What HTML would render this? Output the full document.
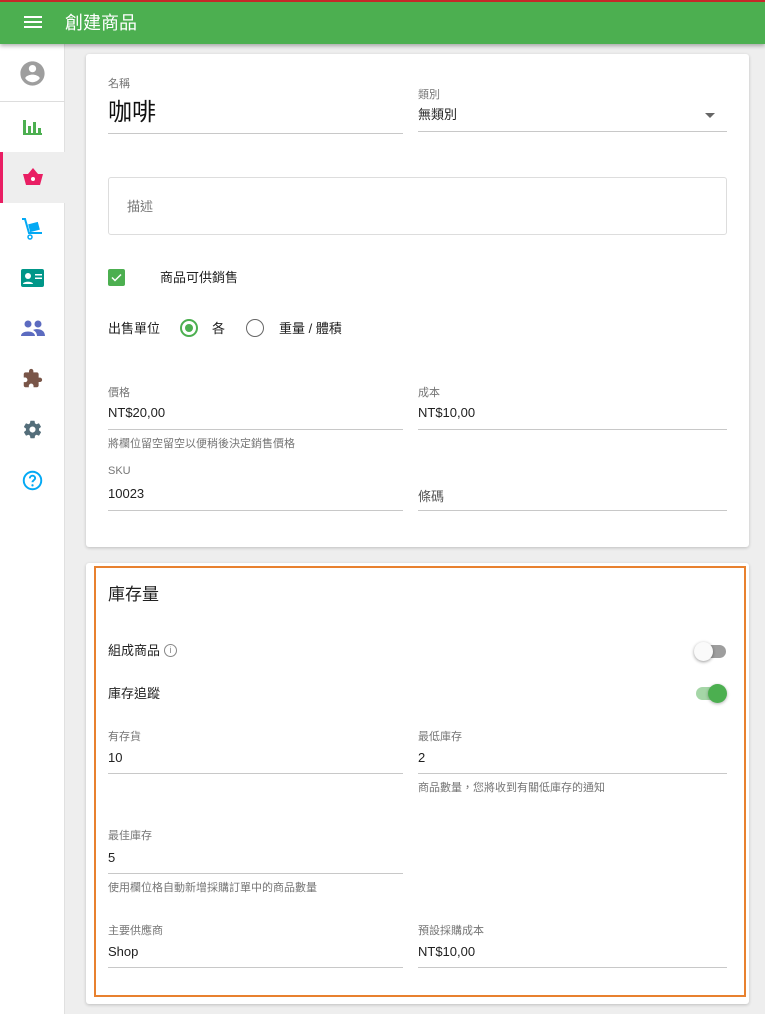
<!DOCTYPE html>
<html><head><meta charset="utf-8"><style>
*{box-sizing:border-box;margin:0;padding:0}
body{width:765px;height:1014px;overflow:hidden;background:#eee;font-family:"Liberation Sans","Noto Sans CJK TC",sans-serif;position:relative;color:#212121}
.a{position:absolute}
.top{left:0;top:0;width:765px;height:44px;background:#4caf50;border-top:2px solid #c62828;box-shadow:0 2px 4px rgba(0,0,0,.3);z-index:2}
.side{left:0;top:44px;width:65px;height:970px;background:#fff;border-right:1px solid #e0e0e0}
.card{background:#fff;border-radius:3px;box-shadow:0 1px 3px rgba(0,0,0,.2)}
.lbl{font-size:11px;color:#757575}
.val{font-size:13px;color:#212121}
.line{height:1px;background:#c8c8c8}
.hint{font-size:11px;color:#757575}
</style></head><body>
<div class="a top">
 <div class="a" style="left:24px;top:14px;width:18px;height:2px;background:#fff;box-shadow:0 5px 0 #fff,0 10px 0 #fff"></div>
 <div class="a" style="left:65px;top:7px;font-size:18px;color:#fff">創建商品</div>
</div>
<div class="a side">
 <svg class="a" style="left:18px;top:15px" width="29" height="29" viewBox="0 0 24 24"><path fill="#9e9e9e" d="M12 2C6.48 2 2 6.48 2 12s4.48 10 10 10 10-4.48 10-10S17.520 2 12 2zm0 3c1.66 0 3 1.34 3 3s-1.34 3-3 3-3-1.34-3-3 1.34-3 3-3zm0 14.2c-2.5 0-4.71-1.28-6-3.22.03-1.990 4-3.08 6-3.08 1.99 0 5.97 1.09 6 3.08-1.29 1.94-3.5 3.22-6 3.22z"/></svg>
 <div class="a" style="left:0;top:57px;width:65px;height:1px;background:#ddd"></div>
 <svg class="a" style="left:22px;top:74px" width="20" height="18" viewBox="0 0 20 18"><path fill="#4caf50" d="M1 2h3v14H1zM6 8h3v8H6zM11 4h3v12h-3zM16 10h3v6h-3zM1 15h19v2H1z"/></svg>
 <div class="a" style="left:0;top:108px;width:65px;height:51px;background:#eee"></div>
 <div class="a" style="left:0;top:108px;width:3px;height:51px;background:#e91e63"></div>
 <svg class="a" style="left:21px;top:123px" width="24" height="20" viewBox="0 0 24 20"><path fill="#e91e63" d="M7 7L12 1l5 6h5l-3 11H5L2 7z"/><circle cx="12" cy="12" r="2" fill="#fff"/></svg>
 <svg class="a" style="left:21px;top:173px" width="24" height="24" viewBox="0 0 24 24"><path fill="none" stroke="#03a9f4" stroke-width="2" d="M1 2h3l4 14h13"/><rect x="8" y="6" width="10" height="8" fill="#03a9f4" transform="rotate(-15 13 10)"/><circle cx="9" cy="20" r="2" fill="none" stroke="#03a9f4" stroke-width="1.5"/></svg>
 <svg class="a" style="left:21px;top:225px" width="23" height="18" viewBox="0 0 23 18"><rect width="23" height="18" rx="2" fill="#009688"/><circle cx="7" cy="7" r="3" fill="#fff"/><path fill="#fff" d="M2 15c0-3 10-3 10 0zM14 5h7v1.5h-7zM14 8.5h7V10h-7z"/></svg>
 <svg class="a" style="left:21px;top:276px" width="24" height="16" viewBox="0 0 24 16"><circle cx="7" cy="4" r="3.5" fill="#5c6bc0"/><circle cx="17" cy="4" r="3.5" fill="#5c6bc0"/><path fill="#5c6bc0" d="M0 16c0-6 14-6 14 0zM12 10c4-2 12-1 12 6h-8c0-3-2-5-4-6z"/></svg>
 <svg class="a" style="left:22px;top:324px" width="21" height="21" viewBox="0 0 24 24"><path fill="#795548" d="M20.5 11H19V7c0-1.1-.9-2-2-2h-4V3.5a2.5 2.5 0 00-5 0V5H4c-1.1 0-2 .9-2 2v3.8h1.5c1.5 0 2.7 1.2 2.7 2.7S5 16.2 3.5 16.2H2V20c0 1.1.9 2 2 2h3.8v-1.5c0-1.5 1.2-2.7 2.7-2.7s2.7 1.2 2.7 2.7V22H17c1.1 0 2-.9 2-2v-4h1.5a2.5 2.5 0 000-5z"/></svg>
 <svg class="a" style="left:22px;top:375px" width="21" height="21" viewBox="0 0 24 24"><path fill="#546e7a" d="M19.4 13c.04-.3.06-.65.06-1s-.02-.7-.07-1l2.1-1.650c.2-.15.24-.42.12-.64l-2-3.46c-.12-.22-.39-.3-.61-.22l-2.5 1c-.52-.4-1.08-.73-1.7-.98l-.37-2.65A.49.49 0 0014 2h-4c-.25 0-.46.18-.5.42l-.37 2.65c-.62.25-1.18.59-1.7.98l-2.5-1c-.22-.08-.49 0-.61.22l-2 3.46c-.13.22-.07.49.12.64L4.57 11c-.05.3-.07.65-.07 1s.02.7.07 1l-2.1 1.65c-.2.15-.25.42-.13.64l2 3.46c.12.22.39.3.61.22l2.5-1c.52.4 1.08.73 1.7.98l.37 2.65c.04.24.25.42.5.42h4c.25 0 .46-.18.5-.42l.37-2.65c.62-.25 1.18-.59 1.7-.98l2.5 1c.22.08.49 0 .61-.22l2-3.46c.12-.22.07-.49-.12-.64zM12 15.5a3.5 3.5 0 110-7 3.5 3.5 0 010 7z"/></svg>
 <svg class="a" style="left:22px;top:426px" width="21" height="21" viewBox="0 0 24 24"><circle cx="12" cy="12" r="10" fill="none" stroke="#03a9f4" stroke-width="2.2"/><path fill="none" stroke="#03a9f4" stroke-width="2.2" d="M9 9.5a3 3 0 116 0c0 2-3 2.3-3 4.5"/><circle cx="12" cy="17.5" r="1.3" fill="#03a9f4"/></svg>
</div>

<div class="a card" style="left:86px;top:54px;width:663px;height:493px">
 <div class="a lbl" style="left:22px;top:21px">名稱</div>
 <div class="a" style="left:22px;top:38px;font-size:24px;color:#111">咖啡</div>
 <div class="a line" style="left:22px;top:79px;width:295px"></div>
 <div class="a lbl" style="left:332px;top:32px">類別</div>
 <div class="a val" style="left:332px;top:50px">無類別</div>
 <div class="a" style="left:619px;top:59px;border:5px solid transparent;border-top-color:#666;border-bottom:0"></div>
 <div class="a line" style="left:332px;top:77px;width:309px"></div>
 <div class="a" style="left:22px;top:123px;width:619px;height:58px;border:1px solid #ddd;border-radius:3px"></div>
 <div class="a" style="left:41px;top:142px;font-size:13px;color:#757575">描述</div>
 <div class="a" style="left:22px;top:215px;width:17px;height:17px;background:#4caf50;border-radius:2px"><svg width="17" height="17"><path d="M4 8.5l3 3 6-6" fill="none" stroke="#fff" stroke-width="1.5"/></svg></div>
 <div class="a val" style="left:74px;top:213px">商品可供銷售</div>
 <div class="a val" style="left:22px;top:264px">出售單位</div>
 <div class="a" style="left:94px;top:265px;width:18px;height:18px;border:2px solid #4caf50;border-radius:50%"><div style="margin:3px;width:8px;height:8px;border-radius:50%;background:#4caf50"></div></div>
 <div class="a val" style="left:126px;top:264px">各</div>
 <div class="a" style="left:160px;top:265px;width:18px;height:18px;border:1.5px solid #666;border-radius:50%"></div>
 <div class="a val" style="left:193px;top:264px">重量 / 體積</div>
 <div class="a lbl" style="left:22px;top:330px">價格</div>
 <div class="a val" style="left:22px;top:351px">NT$20,00</div>
 <div class="a line" style="left:22px;top:375px;width:295px"></div>
 <div class="a hint" style="left:22px;top:381px">將欄位留空留空以便稍後決定銷售價格</div>
 <div class="a lbl" style="left:332px;top:330px">成本</div>
 <div class="a val" style="left:332px;top:351px">NT$10,00</div>
 <div class="a line" style="left:332px;top:375px;width:309px"></div>
 <div class="a lbl" style="left:22px;top:411px">SKU</div>
 <div class="a val" style="left:22px;top:432px">10023</div>
 <div class="a line" style="left:22px;top:456px;width:295px"></div>
 <div class="a val" style="left:332px;top:432px;color:#555">條碼</div>
 <div class="a line" style="left:332px;top:456px;width:309px"></div>
</div>

<div class="a card" style="left:86px;top:563px;width:663px;height:441px"></div>
<div class="a" style="left:94px;top:566px;width:652px;height:431px;border:2px solid #e8812f"></div>
<div class="a" style="left:108px;top:580px;font-size:17px">庫存量</div>
<div class="a val" style="left:108px;top:640px">組成商品</div>
<div class="a" style="left:164px;top:644px;width:13px;height:13px;border:1px solid #888;border-radius:50%;font-size:9px;color:#888;text-align:center;line-height:11px">i</div>
<div class="a" style="left:697px;top:645px;width:29px;height:13px;border-radius:7px;background:#9e9e9e"></div>
<div class="a" style="left:694px;top:642px;width:19px;height:19px;border-radius:50%;background:#fafafa;box-shadow:0 1px 3px rgba(0,0,0,.4)"></div>
<div class="a val" style="left:108px;top:683px">庫存追蹤</div>
<div class="a" style="left:696px;top:687px;width:29px;height:13px;border-radius:7px;background:#a5d6a7"></div>
<div class="a" style="left:708px;top:684px;width:19px;height:19px;border-radius:50%;background:#4caf50;box-shadow:0 1px 3px rgba(0,0,0,.3)"></div>
<div class="a lbl" style="left:108px;top:728px">有存貨</div>
<div class="a val" style="left:108px;top:750px">10</div>
<div class="a line" style="left:108px;top:773px;width:295px"></div>
<div class="a lbl" style="left:418px;top:728px">最低庫存</div>
<div class="a val" style="left:418px;top:750px">2</div>
<div class="a line" style="left:418px;top:773px;width:309px"></div>
<div class="a hint" style="left:418px;top:779px">商品數量，您將收到有關低庫存的通知</div>
<div class="a lbl" style="left:108px;top:827px">最佳庫存</div>
<div class="a val" style="left:108px;top:850px">5</div>
<div class="a line" style="left:108px;top:873px;width:295px"></div>
<div class="a hint" style="left:108px;top:879px">使用欄位格自動新增採購訂單中的商品數量</div>
<div class="a lbl" style="left:108px;top:922px">主要供應商</div>
<div class="a val" style="left:108px;top:944px">Shop</div>
<div class="a line" style="left:108px;top:967px;width:295px"></div>
<div class="a lbl" style="left:418px;top:922px">預設採購成本</div>
<div class="a val" style="left:418px;top:944px">NT$10,00</div>
<div class="a line" style="left:418px;top:967px;width:309px"></div>
</body></html>
